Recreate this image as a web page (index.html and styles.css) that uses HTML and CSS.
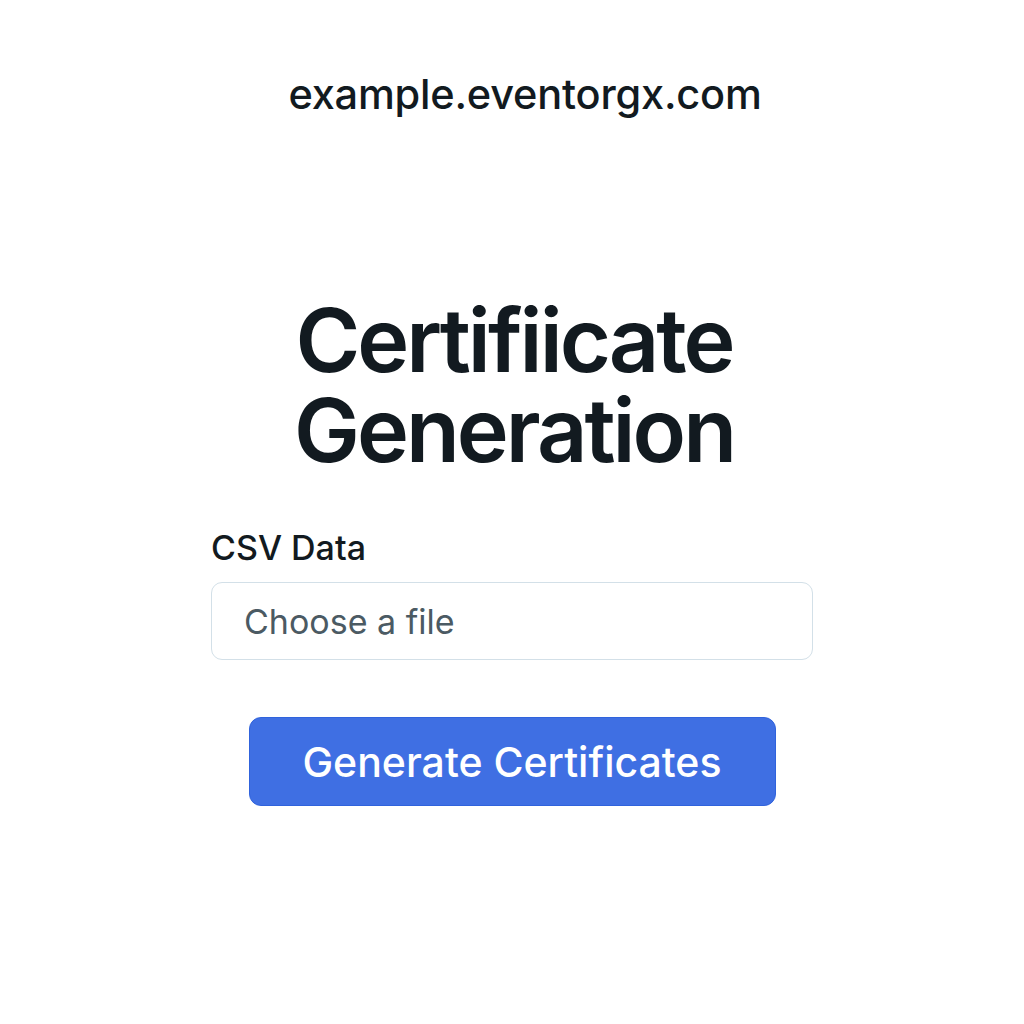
FILE: index.html
```html
<!DOCTYPE html>
<html lang="en">
<head>
<meta charset="utf-8">
<title>Certificate Generation</title>
<link rel="stylesheet" href="styles.css">
</head>
<body>
<div class="page">
  <header class="site">example.eventorgx.com</header>
  <main class="main">
    <h1 class="title">Certifiicate<br>Generation</h1>
    <form class="form">
      <label class="label" for="csv">CSV Data</label>
      <div class="file" id="csv">Choose a file</div>
      <button type="button" class="btn">Generate Certificates</button>
    </form>
  </main>
</div>
</body>
</html>
```
FILE: styles.css
```css
* { box-sizing: border-box; }
html, body { margin: 0; padding: 0; background: #ffffff; }
body {
  font-family: Inter, "Noto Sans", "Liberation Sans", sans-serif;
  color: #121a20;
}
.page {
  width: 1024px;
  height: 1024px;
  display: flex;
  flex-direction: column;
  align-items: center;
}
.site {
  margin-top: 68px;
  font-size: 41.5px;
  line-height: 52px;
  font-weight: 500;
  letter-spacing: -0.2px;
  padding-left: 26px;
}
.main {
  display: flex;
  flex-direction: column;
  align-items: center;
  margin-top: 175px;
}
.title {
  margin: 0;
  text-align: center;
  font-size: 88px;
  line-height: 90px;
  font-weight: 600;
  letter-spacing: -3px;
  padding-left: 4px;
}
.form {
  width: 602px;
  display: flex;
  flex-direction: column;
  margin-top: 53px;
}
.label {
  font-size: 34px;
  line-height: 40px;
  font-weight: 500;
  color: #121a20;
}
.file {
  margin-top: 14px;
  height: 78px;
  border: 1.5px solid #d3e0e8;
  border-radius: 11px;
  padding-left: 32px;
  display: flex;
  align-items: center;
  font-size: 34px;
  color: #4b5a63;
}
.btn {
  align-self: center;
  margin-top: 57px;
  width: 527px;
  height: 89px;
  border: 1.5px solid #3063dc;
  border-radius: 12px;
  background: #3f6fe3;
  color: #ffffff;
  font-family: inherit;
  font-size: 41px;
  font-weight: 500;
  cursor: pointer;
}
```
